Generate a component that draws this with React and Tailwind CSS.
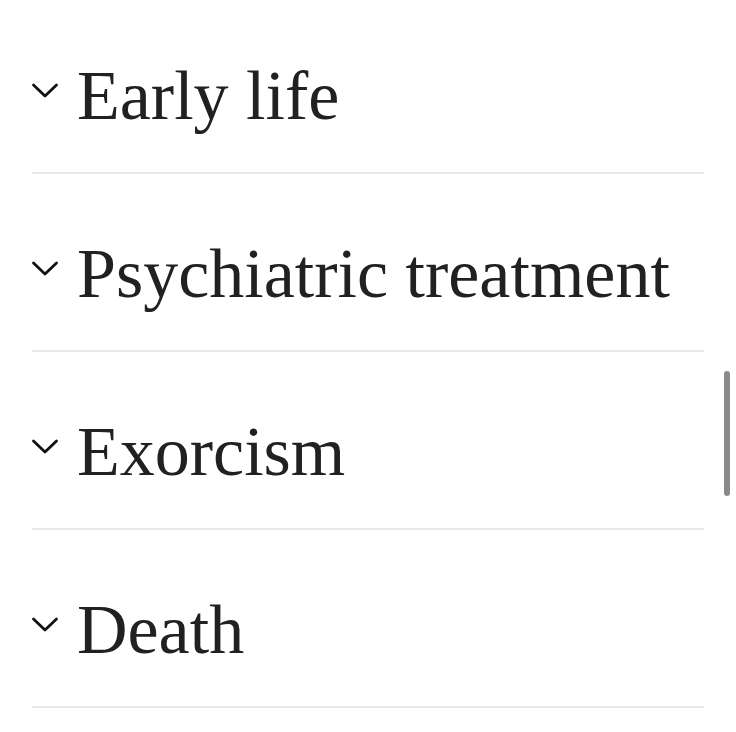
import React from "react";

const sections = ["Early life", "Psychiatric treatment", "Exorcism", "Death"];

const Chevron = () => (
    <svg width="28" height="18" viewBox="0 0 28 18" className="shrink-0 mt-[21px]">
        <polyline points="2.5,3 14,14 25.5,3" fill="none" stroke="#111" strokeWidth="2.8" strokeLinecap="round" strokeLinejoin="round" />
    </svg>
);

const App = () => {
    return (
        <div className="relative w-[736px] h-[732px] overflow-hidden bg-white">
            <div className="-mt-[4px] px-[32px]">
                {sections.map((title) => (
                    <div
                        key={title}
                        className="h-[178px] border-b-2 border-[#e8e8e8] flex items-end pb-[41px]"
                    >
                        <div className="flex items-start gap-[18px] -ml-[1px]">
                            <Chevron />
                            <h2
                                className="text-[70px] leading-[70px] text-[#202122]"
                                style={{fontFamily: '"Liberation Serif", serif'}}
                            >
                                {title}
                            </h2>
                        </div>
                    </div>
                ))}
            </div>
            {/* scrollbar thumb */}
            <div className="absolute left-[724px] top-[371px] w-[6px] h-[125px] rounded-full bg-[#8a8a8a]" />
        </div>
    );
};

export default App;
